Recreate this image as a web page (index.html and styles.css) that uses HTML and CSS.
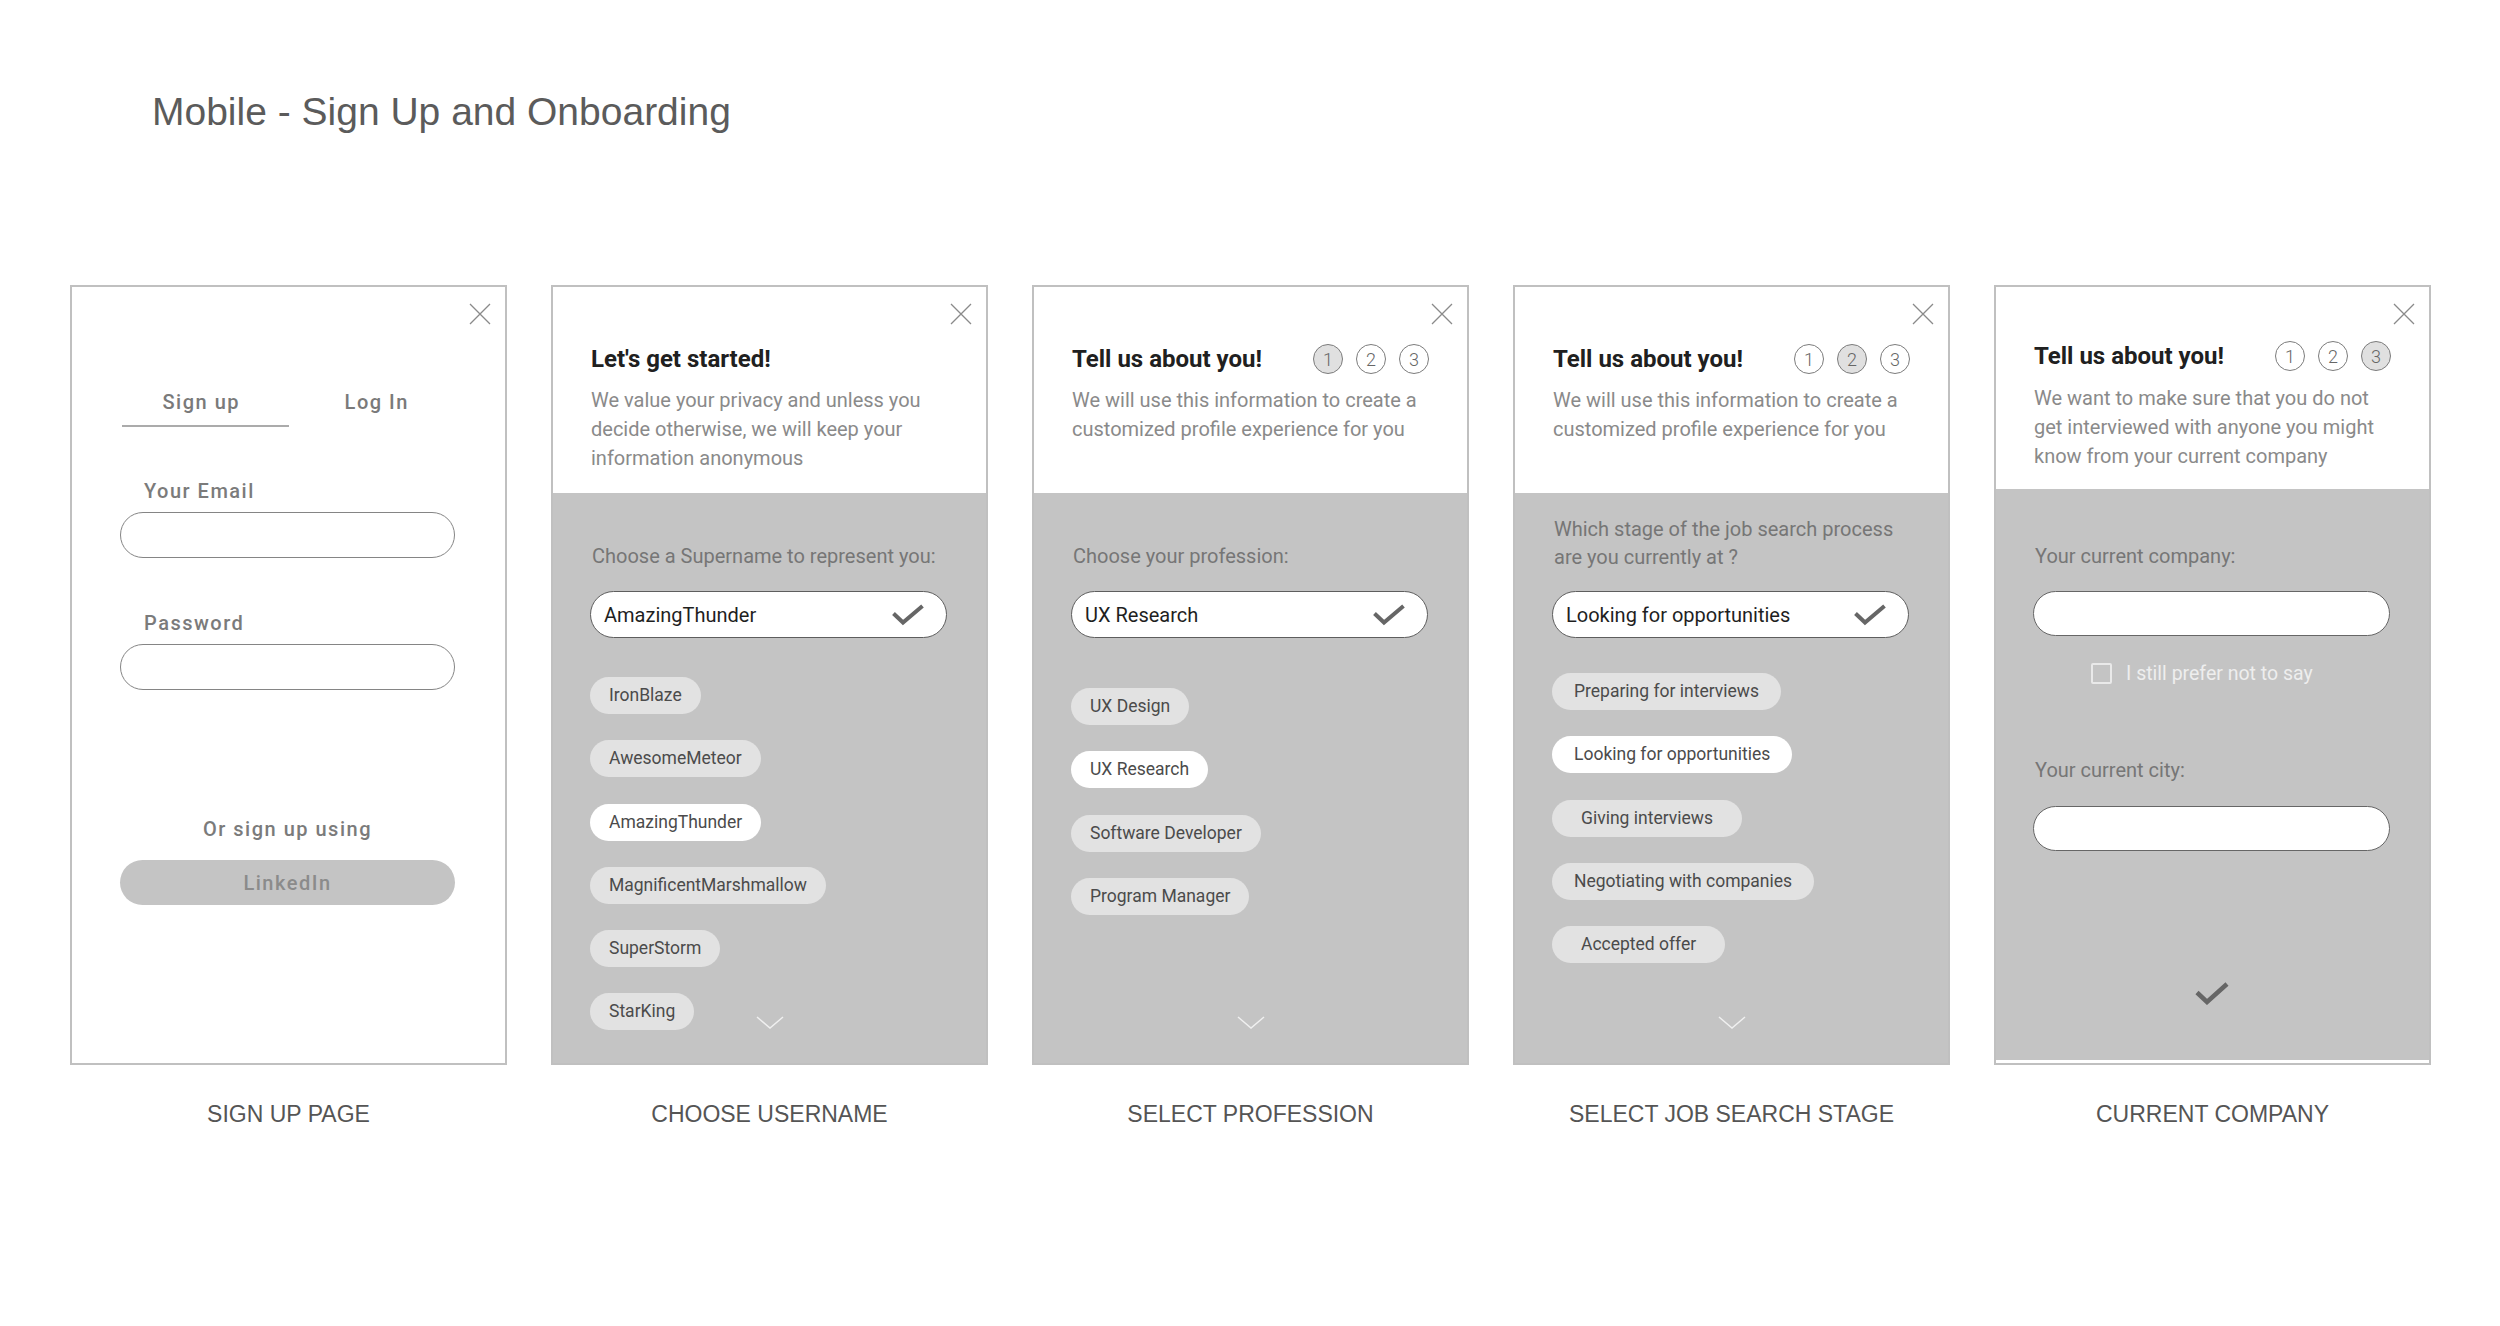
FILE: index.html
```html
<!DOCTYPE html>
<html lang="en">
<head>
<meta charset="utf-8">
<title>Mobile - Sign Up and Onboarding</title>
<link rel="stylesheet" href="styles.css">
</head>
<body>
<div class="page">
  <h1 class="page-title">Mobile - Sign Up and Onboarding</h1>
  <div class="screens">

    <!-- 1. Sign up page -->
    <div class="screen">
      <div class="card card-signup">
        <svg class="close" width="22" height="22" viewBox="0 0 22 22"><path d="M1 1L21 21M21 1L1 21"/></svg>
        <div class="tabs">
          <div class="tab active">Sign up</div>
          <div class="tab tab-second">Log In</div>
        </div>
        <div class="field-label">Your Email</div>
        <div class="field-input"></div>
        <div class="field-label field-label-2">Password</div>
        <div class="field-input"></div>
        <div class="alt-label">Or sign up using</div>
        <div class="linkedin">LinkedIn</div>
      </div>
      <div class="caption">SIGN UP PAGE</div>
    </div>

    <!-- 2. Choose username -->
    <div class="screen">
      <div class="card">
        <svg class="close" width="22" height="22" viewBox="0 0 22 22"><path d="M1 1L21 21M21 1L1 21"/></svg>
        <div class="card-head">
          <div class="head-row">
            <h2 class="card-title">Let's get started!</h2>
          </div>
          <p class="card-desc">We value your privacy and unless you<br>decide otherwise, we will keep your<br>information anonymous</p>
        </div>
        <div class="card-body">
          <div class="q-label">Choose a Supername to represent you:</div>
          <div class="select">
            <span>AmazingThunder</span>
            <svg class="tick" width="32" height="22" viewBox="0 0 32 22"><path d="M1.5 9.5L11 18.5L30.5 2"/></svg>
          </div>
          <div class="chips">
            <div class="chip">IronBlaze</div>
            <div class="chip">AwesomeMeteor</div>
            <div class="chip selected">AmazingThunder</div>
            <div class="chip">MagnificentMarshmallow</div>
            <div class="chip">SuperStorm</div>
            <div class="chip">StarKing</div>
          </div>
          <svg class="chevron" width="28" height="14" viewBox="0 0 28 14"><path d="M1 1L14 12L27 1"/></svg>
        </div>
      </div>
      <div class="caption">CHOOSE USERNAME</div>
    </div>

    <!-- 3. Select profession -->
    <div class="screen">
      <div class="card">
        <svg class="close" width="22" height="22" viewBox="0 0 22 22"><path d="M1 1L21 21M21 1L1 21"/></svg>
        <div class="card-head">
          <div class="head-row">
            <h2 class="card-title">Tell us about you!</h2>
            <div class="steps">
              <span class="step current">1</span>
              <span class="step">2</span>
              <span class="step">3</span>
            </div>
          </div>
          <p class="card-desc">We will use this information to create a<br>customized profile experience for you</p>
        </div>
        <div class="card-body">
          <div class="q-label">Choose your profession:</div>
          <div class="select">
            <span>UX Research</span>
            <svg class="tick" width="32" height="22" viewBox="0 0 32 22"><path d="M1.5 9.5L11 18.5L30.5 2"/></svg>
          </div>
          <div class="chips chips-profession">
            <div class="chip">UX Design</div>
            <div class="chip selected">UX Research</div>
            <div class="chip">Software Developer</div>
            <div class="chip">Program Manager</div>
          </div>
          <svg class="chevron" width="28" height="14" viewBox="0 0 28 14"><path d="M1 1L14 12L27 1"/></svg>
        </div>
      </div>
      <div class="caption">SELECT PROFESSION</div>
    </div>

    <!-- 4. Select job search stage -->
    <div class="screen">
      <div class="card">
        <svg class="close" width="22" height="22" viewBox="0 0 22 22"><path d="M1 1L21 21M21 1L1 21"/></svg>
        <div class="card-head">
          <div class="head-row">
            <h2 class="card-title">Tell us about you!</h2>
            <div class="steps">
              <span class="step">1</span>
              <span class="step current">2</span>
              <span class="step">3</span>
            </div>
          </div>
          <p class="card-desc">We will use this information to create a<br>customized profile experience for you</p>
        </div>
        <div class="card-body">
          <div class="q-label q-label-two">Which stage of the job search process<br>are you currently at ?</div>
          <div class="select">
            <span>Looking for opportunities</span>
            <svg class="tick" width="32" height="22" viewBox="0 0 32 22"><path d="M1.5 9.5L11 18.5L30.5 2"/></svg>
          </div>
          <div class="chips chips-stage">
            <div class="chip">Preparing for interviews</div>
            <div class="chip selected">Looking for opportunities</div>
            <div class="chip chip-wide">Giving interviews</div>
            <div class="chip">Negotiating with companies</div>
            <div class="chip chip-wide">Accepted offer</div>
          </div>
          <svg class="chevron" width="28" height="14" viewBox="0 0 28 14"><path d="M1 1L14 12L27 1"/></svg>
        </div>
      </div>
      <div class="caption">SELECT JOB SEARCH STAGE</div>
    </div>

    <!-- 5. Current company -->
    <div class="screen">
      <div class="card">
        <svg class="close" width="22" height="22" viewBox="0 0 22 22"><path d="M1 1L21 21M21 1L1 21"/></svg>
        <div class="card-head card-head-short">
          <div class="head-row">
            <h2 class="card-title">Tell us about you!</h2>
            <div class="steps">
              <span class="step">1</span>
              <span class="step">2</span>
              <span class="step current">3</span>
            </div>
          </div>
          <p class="card-desc">We want to make sure that you do not<br>get interviewed with anyone you might<br>know from your current company</p>
        </div>
        <div class="card-body card-body-inset">
          <div class="q-label">Your current company:</div>
          <div class="text-input"></div>
          <label class="checkrow">
            <span class="checkbox"></span>
            <span class="check-text">I still prefer not to say</span>
          </label>
          <div class="q-label q-label-city">Your current city:</div>
          <div class="text-input"></div>
          <svg class="final-tick" width="34" height="24" viewBox="0 0 34 24"><path d="M2 11.5L12 21L32 3"/></svg>
        </div>
      </div>
      <div class="caption">CURRENT COMPANY</div>
    </div>

  </div>
</div>
</body>
</html>
```
FILE: styles.css
```css
* {
  box-sizing: border-box;
}

html, body {
  margin: 0;
  padding: 0;
  background: #ffffff;
}

body {
  font-family: Roboto, "Noto Sans", sans-serif;
  color: #333;
}

.page {
  width: 2500px;
  height: 1326px;
  overflow: hidden;
}

.page-title {
  margin: 0;
  padding: 88px 0 0 152px;
  font-family: "Liberation Sans", Arial, sans-serif;
  font-weight: normal;
  font-size: 39px;
  line-height: 48px;
  color: #5b5b5b;
}

.screens {
  display: flex;
  gap: 44px;
  padding-left: 70px;
  margin-top: 149px;
}

.screen {
  width: 437px;
  display: flex;
  flex-direction: column;
}

.card {
  position: relative;
  height: 780px;
  border: 2px solid #c0c0c0;
  background: #fff;
  display: flex;
  flex-direction: column;
}

.caption {
  margin-top: 35px;
  text-align: center;
  font-family: "Liberation Sans", Arial, sans-serif;
  font-size: 23px;
  line-height: 28px;
  color: #555;
}

/* close icon */
.close {
  position: absolute;
  top: 16px;
  right: 14px;
  fill: none;
  stroke: #8a8a8a;
  stroke-width: 1.3;
}

/* ---------- Sign up card ---------- */
.card-signup {
  padding: 103px 50px 0 48px;
}

.tabs {
  display: flex;
  margin-left: 2px;
}

.tab {
  width: 167px;
  text-align: center;
  font-weight: 500;
  font-size: 20px;
  line-height: 24px;
  letter-spacing: 1.5px;
  color: #7a7a7a;
  padding: 0 8px 11px 0;
  border-bottom: 2px solid transparent;
}

.tab-second {
  padding: 0 0 11px 10px;
}

.tab.active {
  border-bottom-color: #ababab;
}

.field-label {
  margin: 52px 0 9px 24px;
  font-weight: 500;
  font-size: 20px;
  line-height: 24px;
  letter-spacing: 1.5px;
  color: #7b7b7b;
}

.field-label-2 {
  margin-top: 53px;
}

.field-input {
  height: 46px;
  border: 1.5px solid #858585;
  border-radius: 23px;
  background: #fff;
}

.alt-label {
  margin-top: 127px;
  text-align: center;
  font-weight: 500;
  font-size: 20px;
  line-height: 24px;
  letter-spacing: 1.5px;
  color: #7b7b7b;
}

.linkedin {
  margin-top: 19px;
  height: 45px;
  border-radius: 23px;
  background: #c4c4c4;
  display: flex;
  align-items: center;
  justify-content: center;
  font-weight: 500;
  font-size: 20px;
  letter-spacing: 1.5px;
  color: #8b8b8b;
}

/* ---------- Onboarding cards ---------- */
.card-head {
  height: 206px;
  flex: none;
  padding: 56px 38px 0 38px;
}

.card-head-short {
  height: 202px;
  padding-top: 53px;
}

.head-row {
  display: flex;
  align-items: center;
  height: 32px;
}

.card-title {
  margin: 0;
  font-weight: 700;
  font-size: 24px;
  line-height: 32px;
  color: #202020;
}

.steps {
  margin-left: auto;
  display: flex;
  gap: 13px;
}

.step {
  width: 30px;
  height: 30px;
  border: 1px solid #7c7c7c;
  border-radius: 50%;
  display: flex;
  align-items: center;
  justify-content: center;
  font-weight: 300;
  font-size: 18px;
  color: #666;
}

.step.current {
  background: #e0e0e0;
}

.card-desc {
  margin: 11px 0 0;
  font-size: 20px;
  line-height: 29px;
  color: #8a8a8a;
}

.card-head-short .card-desc {
  margin-top: 12px;
}

.card-body {
  position: relative;
  flex: 1;
  background: #c4c4c4;
  padding: 20px 39px 0 37px;
  display: flex;
  flex-direction: column;
}

.card-body-inset {
  margin-bottom: 3px;
  padding-top: 24px;
}

.q-label {
  height: 58px;
  display: flex;
  flex-direction: column;
  justify-content: flex-end;
  padding-left: 2px;
  margin-bottom: 20px;
  font-size: 20px;
  line-height: 29px;
  color: #767676;
}

.q-label-two {
  line-height: 28px;
  padding-bottom: 0;
}

.select {
  height: 47px;
  border: 1px solid #5e5e5e;
  border-radius: 24px;
  background: #fff;
  display: flex;
  align-items: center;
  justify-content: space-between;
  padding: 0 22px 0 13px;
  font-size: 20px;
  color: #1f1f1f;
}

.tick {
  fill: none;
  stroke: #666;
  stroke-width: 4;
}

.chips {
  margin-top: 39px;
  display: flex;
  flex-direction: column;
  align-items: flex-start;
  gap: 26.3px;
}

.chips-profession {
  margin-top: 50px;
}

.chips-stage {
  margin-top: 35px;
}

.chip {
  height: 37px;
  padding: 0 19px;
  border-radius: 19px;
  background: #e2e2e2;
  font-size: 17.5px;
  line-height: 37px;
  color: #4b4b4b;
  white-space: nowrap;
}

.chips-stage .chip {
  padding: 0 22px;
}

.chips-stage .chip-wide {
  padding: 0 29px;
}

.chip.selected {
  background: #ffffff;
}

.chevron {
  position: absolute;
  bottom: 33px;
  left: 50%;
  transform: translateX(-50%);
  fill: none;
  stroke: #f0f0f0;
  stroke-width: 1.5;
}

/* current company card */
.text-input {
  height: 45px;
  border: 1px solid #666;
  border-radius: 23px;
  background: #fff;
}

.checkrow {
  margin: 23px 0 0 58px;
  height: 29px;
  display: flex;
  align-items: center;
  gap: 14px;
}

.checkbox {
  width: 21px;
  height: 21px;
  border: 2px solid #e9e9e9;
  border-radius: 2px;
}

.check-text {
  font-size: 19.5px;
  color: #eeeeee;
}

.q-label-city {
  margin-top: 39px;
  margin-bottom: 21px;
}

.final-tick {
  align-self: center;
  margin-top: 130px;
  fill: none;
  stroke: #666;
  stroke-width: 4.5;
}
```
